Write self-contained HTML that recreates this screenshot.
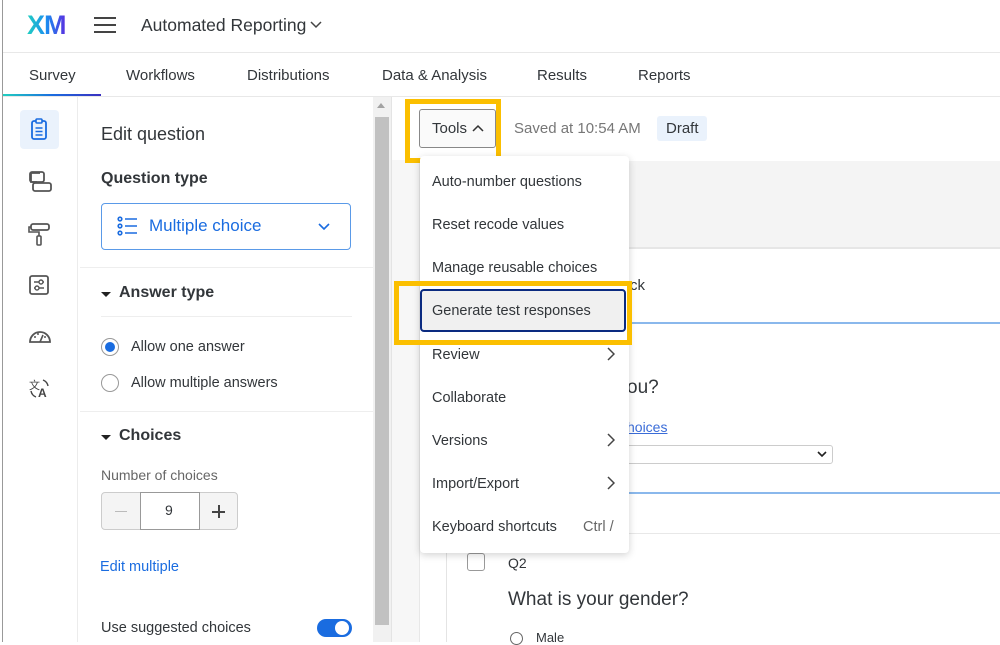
<!DOCTYPE html>
<html><head><meta charset="utf-8"><style>
*{box-sizing:border-box;margin:0;padding:0}
body{width:1000px;height:642px;overflow:hidden;background:#fff;font-family:"Liberation Sans",sans-serif;color:#32363a;position:relative}
.a{position:absolute}
.t{white-space:nowrap}
</style></head><body>
<div class="a" style="left:2px;top:0;width:1px;height:642px;background:#999"></div>
<!-- header -->
<div class="a t" style="left:27px;top:10px;font-size:27px;font-weight:bold;letter-spacing:-1px;background:linear-gradient(90deg,#21d0c0,#1a8cf0 50%,#5a2ee0);-webkit-background-clip:text;color:transparent">XM</div>
<div class="a" style="left:94px;top:17px;width:22px;height:2px;background:#444;box-shadow:0 7px 0 #444,0 14px 0 #444"></div>
<div class="a t" style="left:141px;top:15px;font-size:17.5px;color:#32363a">Automated Reporting</div>
<svg class="a" style="left:310px;top:21px" width="12" height="8"><path d="M1 1l5 5 5-5" stroke="#444" stroke-width="1.5" fill="none"/></svg>
<div class="a" style="left:3px;top:52px;width:997px;height:1px;background:#e8e8e8"></div>
<!-- tabs -->
<div class="a t" style="left:29px;top:67px;font-size:15px;color:#32363a">Survey</div>
<div class="a t" style="left:126px;top:67px;font-size:15px">Workflows</div>
<div class="a t" style="left:247px;top:67px;font-size:15px">Distributions</div>
<div class="a t" style="left:382px;top:67px;font-size:15px">Data &amp; Analysis</div>
<div class="a t" style="left:537px;top:67px;font-size:15px">Results</div>
<div class="a t" style="left:638px;top:67px;font-size:15px">Reports</div>
<div class="a" style="left:3px;top:94px;width:98px;height:3px;background:linear-gradient(90deg,#21d0c0,#1a6ce0,#3a30c0)"></div>
<div class="a" style="left:3px;top:96px;width:997px;height:1px;background:#e8e8e8"></div>
<!-- left icon rail -->
<div class="a" style="left:77px;top:97px;width:1px;height:545px;background:#ececec"></div>
<div class="a" style="left:20px;top:110px;width:39px;height:39px;background:#eaf2fc;border-radius:4px"></div>
<svg class="a" style="left:28px;top:118px" width="22" height="24"><rect x="4" y="3" width="14" height="18" rx="2" fill="none" stroke="#1a6ce0" stroke-width="1.8"/><rect x="8" y="1" width="6" height="4" rx="1" fill="#eaf2fc" stroke="#1a6ce0" stroke-width="1.6"/><path d="M7.5 10h7M7.5 13.5h7M7.5 17h7" stroke="#1a6ce0" stroke-width="1.6"/></svg>
<svg class="a" style="left:27px;top:170px" width="26" height="24"><path d="M13 3H4v9h6" fill="none" stroke="#555" stroke-width="1.8"/><rect x="3" y="2" width="14" height="10" rx="2" fill="none" stroke="#555" stroke-width="1.8"/><rect x="6" y="13" width="18" height="8" rx="2" fill="#fff" stroke="#555" stroke-width="1.8"/></svg>
<svg class="a" style="left:28px;top:222px" width="24" height="24"><rect x="3" y="2" width="18" height="6" rx="2" fill="none" stroke="#555" stroke-width="1.8"/><path d="M3 5H1v5h10v4" fill="none" stroke="#555" stroke-width="1.6"/><rect x="9" y="14" width="4" height="9" rx="1" fill="none" stroke="#555" stroke-width="1.6"/></svg>
<svg class="a" style="left:28px;top:274px" width="22" height="22"><rect x="2" y="2" width="18" height="18" rx="2" fill="none" stroke="#555" stroke-width="1.8"/><path d="M6 8h10M6 14h10" stroke="#555" stroke-width="1.4"/><circle cx="13" cy="8" r="2" fill="#fff" stroke="#555" stroke-width="1.4"/><circle cx="9" cy="14" r="2" fill="#fff" stroke="#555" stroke-width="1.4"/></svg>
<svg class="a" style="left:28px;top:327px" width="24" height="18"><path d="M2 15A10 10 0 0 1 22 15Z" fill="none" stroke="#555" stroke-width="1.8"/><path d="M12 15l3-7" stroke="#555" stroke-width="1.6"/><circle cx="7" cy="10" r="1" fill="#555"/><circle cx="10" cy="7" r="1" fill="#555"/><circle cx="17" cy="10" r="1" fill="#555"/></svg>
<div class="a t" style="left:29px;top:377px;font-size:11px;color:#444">文</div>
<div class="a t" style="left:38px;top:386px;font-size:12px;font-weight:bold;color:#444">A</div>
<svg class="a" style="left:29px;top:378px" width="22" height="22"><path d="M14 2a8 8 0 0 1 5 6M2 13a8 8 0 0 0 5 6" fill="none" stroke="#444" stroke-width="1.4"/></svg>
<!-- left panel -->
<div class="a t" style="left:101px;top:124px;font-size:18px">Edit question</div>
<div class="a t" style="left:101px;top:170px;font-size:16px;font-weight:bold">Question type</div>
<div class="a" style="left:101px;top:203px;width:250px;height:47px;border:1px solid #5a9ae8;border-radius:4px"></div>
<svg class="a" style="left:117px;top:216px" width="22" height="20"><g fill="none" stroke="#1a6ce0" stroke-width="1.6"><circle cx="3" cy="3" r="1.8"/><circle cx="3" cy="10" r="1.8"/><circle cx="3" cy="17" r="1.8"/><path d="M8 3h12M8 10h12M8 17h12"/></g></svg>
<div class="a t" style="left:149px;top:216px;font-size:17px;color:#1a6ce0">Multiple choice</div>
<svg class="a" style="left:318px;top:223px" width="12" height="8"><path d="M1 1l5 5 5-5" stroke="#1a6ce0" stroke-width="1.6" fill="none"/></svg>
<div class="a" style="left:80px;top:267px;width:293px;height:1px;background:#eee"></div>
<div class="a" style="left:101px;top:292px;border:5px solid transparent;border-top:5px solid #222;border-bottom:0"></div>
<div class="a t" style="left:119px;top:284px;font-size:16px;font-weight:bold">Answer type</div>
<div class="a" style="left:101px;top:316px;width:251px;height:1px;background:#eee"></div>
<div class="a" style="left:101px;top:338px;width:18px;height:18px;border:1px solid #999;border-radius:50%"></div>
<div class="a" style="left:105px;top:342px;width:10px;height:10px;background:#1a6ce0;border-radius:50%"></div>
<div class="a t" style="left:131px;top:339px;font-size:14.5px">Allow one answer</div>
<div class="a" style="left:101px;top:374px;width:18px;height:18px;border:1px solid #999;border-radius:50%"></div>
<div class="a t" style="left:131px;top:375px;font-size:14.5px">Allow multiple answers</div>
<div class="a" style="left:80px;top:411px;width:293px;height:1px;background:#eee"></div>
<div class="a" style="left:101px;top:435px;border:5px solid transparent;border-top:5px solid #222;border-bottom:0"></div>
<div class="a t" style="left:119px;top:427px;font-size:16px;font-weight:bold">Choices</div>
<div class="a t" style="left:101px;top:467px;font-size:14px;color:#666">Number of choices</div>
<div class="a" style="left:101px;top:492px;width:137px;height:38px;border:1px solid #ccc;border-radius:4px;background:#f4f4f4"></div>
<div class="a" style="left:140px;top:492px;width:60px;height:38px;border:1px solid #999;background:#fff"></div>
<div class="a" style="left:115px;top:511px;width:12px;height:1px;background:#bbb"></div>
<div class="a t" style="left:165px;top:502px;font-size:14px">9</div>
<div class="a" style="left:212px;top:511px;width:13px;height:1.5px;background:#444"></div>
<div class="a" style="left:218px;top:505px;width:1.5px;height:13px;background:#444"></div>
<div class="a t" style="left:100px;top:559px;font-size:14.5px;color:#1a6ce0">Edit multiple</div>
<div class="a t" style="left:101px;top:620px;font-size:14.5px">Use suggested choices</div>
<div class="a" style="left:317px;top:619px;width:35px;height:18px;background:#1a6ce0;border-radius:9px"></div>
<div class="a" style="left:335px;top:621px;width:14px;height:14px;background:#fff;border-radius:50%"></div>
<!-- scrollbar -->
<div class="a" style="left:373px;top:97px;width:18px;height:545px;background:#f1f1f1"></div>
<div class="a" style="left:377px;top:103px;border:4px solid transparent;border-bottom:5px solid #a3a3a3;border-top:0"></div>
<div class="a" style="left:375px;top:117px;width:14px;height:508px;background:#c1c1c1"></div>
<div class="a" style="left:391px;top:97px;width:1px;height:545px;background:#e4e4e4"></div>
<div class="a" style="left:392px;top:160px;width:27px;height:482px;background:#f7f7f7"></div>
<div class="a" style="left:419px;top:160px;width:1px;height:482px;background:#e8e8e8"></div>
<!-- main area -->
<div class="a" style="left:420px;top:161px;width:580px;height:88px;background:#f4f4f4;border-bottom:2px solid #e6e6e6"></div>
<div class="a" style="left:420px;top:322px;width:580px;height:2px;background:#8ab8ec"></div>
<div class="a" style="left:420px;top:492px;width:580px;height:2px;background:#8ab8ec"></div>
<div class="a" style="left:420px;top:533px;width:580px;height:1px;background:#e8e8e8"></div>
<div class="a" style="left:446px;top:534px;width:1px;height:108px;background:#e4e4e4"></div>
<div class="a t" style="left:630px;top:277px;font-size:15px">ck</div>
<div class="a t" style="left:627px;top:377px;font-size:19px">ou?</div>
<div class="a t" style="left:627px;top:419px;font-size:14px;color:#3a6cd8;text-decoration:underline">hoices</div>
<div class="a" style="left:600px;top:445px;width:233px;height:19px;border:1px solid #ccc;border-radius:3px"></div>
<svg class="a" style="left:817px;top:451px" width="10" height="7"><path d="M1 1l4 4 4-4" stroke="#222" stroke-width="1.6" fill="none"/></svg>
<div class="a" style="left:467px;top:553px;width:18px;height:18px;border:1px solid #999;border-radius:3px"></div>
<div class="a t" style="left:508px;top:555px;font-size:14px">Q2</div>
<div class="a t" style="left:508px;top:589px;font-size:19px">What is your gender?</div>
<div class="a" style="left:510px;top:632px;width:13px;height:13px;border:1px solid #666;border-radius:50%"></div>
<div class="a t" style="left:536px;top:630px;font-size:13px">Male</div>
<!-- toolbar -->
<div class="a" style="left:392px;top:97px;width:608px;height:63px;background:#fff"></div>
<div class="a" style="left:405px;top:99px;width:96px;height:64px;border:5px solid #fbbf00"></div>
<div class="a" style="left:419px;top:109px;width:77px;height:39px;border:1px solid #888;border-radius:3px;background:#fafafa"></div>
<div class="a t" style="left:432px;top:120px;font-size:15px">Tools</div>
<svg class="a" style="left:472px;top:124px" width="12" height="8"><path d="M1 7l5-5 5 5" stroke="#333" stroke-width="1.5" fill="none"/></svg>
<div class="a t" style="left:514px;top:120px;font-size:15px;color:#777">Saved at 10:54 AM</div>
<div class="a" style="left:657px;top:116px;width:50px;height:25px;background:#eaf2fc;border-radius:3px"></div>
<div class="a t" style="left:666px;top:120px;font-size:15px">Draft</div>
<!-- dropdown -->
<div class="a" style="left:420px;top:156px;width:209px;height:397px;background:#fff;border-radius:4px;box-shadow:0 2px 8px rgba(0,0,0,.18)"></div>
<div class="a t" style="left:432px;top:174px;font-size:14.5px">Auto-number questions</div>
<div class="a t" style="left:432px;top:217px;font-size:14.5px">Reset recode values</div>
<div class="a t" style="left:432px;top:260px;font-size:14.5px">Manage reusable choices</div>
<div class="a" style="left:394px;top:281px;width:238px;height:64px;border:5px solid #fbbf00"></div>
<div class="a" style="left:420px;top:289px;width:206px;height:43px;border:2px solid #0a2a80;border-radius:4px;background:#f0f0f0"></div>
<div class="a t" style="left:432px;top:303px;font-size:14.5px">Generate test responses</div>
<div class="a t" style="left:432px;top:347px;font-size:14.5px">Review</div>
<div class="a t" style="left:432px;top:390px;font-size:14.5px">Collaborate</div>
<div class="a t" style="left:432px;top:433px;font-size:14.5px">Versions</div>
<div class="a t" style="left:432px;top:476px;font-size:14.5px">Import/Export</div>
<div class="a t" style="left:432px;top:519px;font-size:14.5px">Keyboard shortcuts</div>
<div class="a t" style="left:583px;top:519px;font-size:14.5px;color:#666">Ctrl /</div>
<svg class="a" style="left:607px;top:347px" width="8" height="14"><path d="M1 1l6 6-6 6" stroke="#444" stroke-width="1.5" fill="none"/></svg>
<svg class="a" style="left:607px;top:433px" width="8" height="14"><path d="M1 1l6 6-6 6" stroke="#444" stroke-width="1.5" fill="none"/></svg>
<svg class="a" style="left:607px;top:476px" width="8" height="14"><path d="M1 1l6 6-6 6" stroke="#444" stroke-width="1.5" fill="none"/></svg>
</body></html>
